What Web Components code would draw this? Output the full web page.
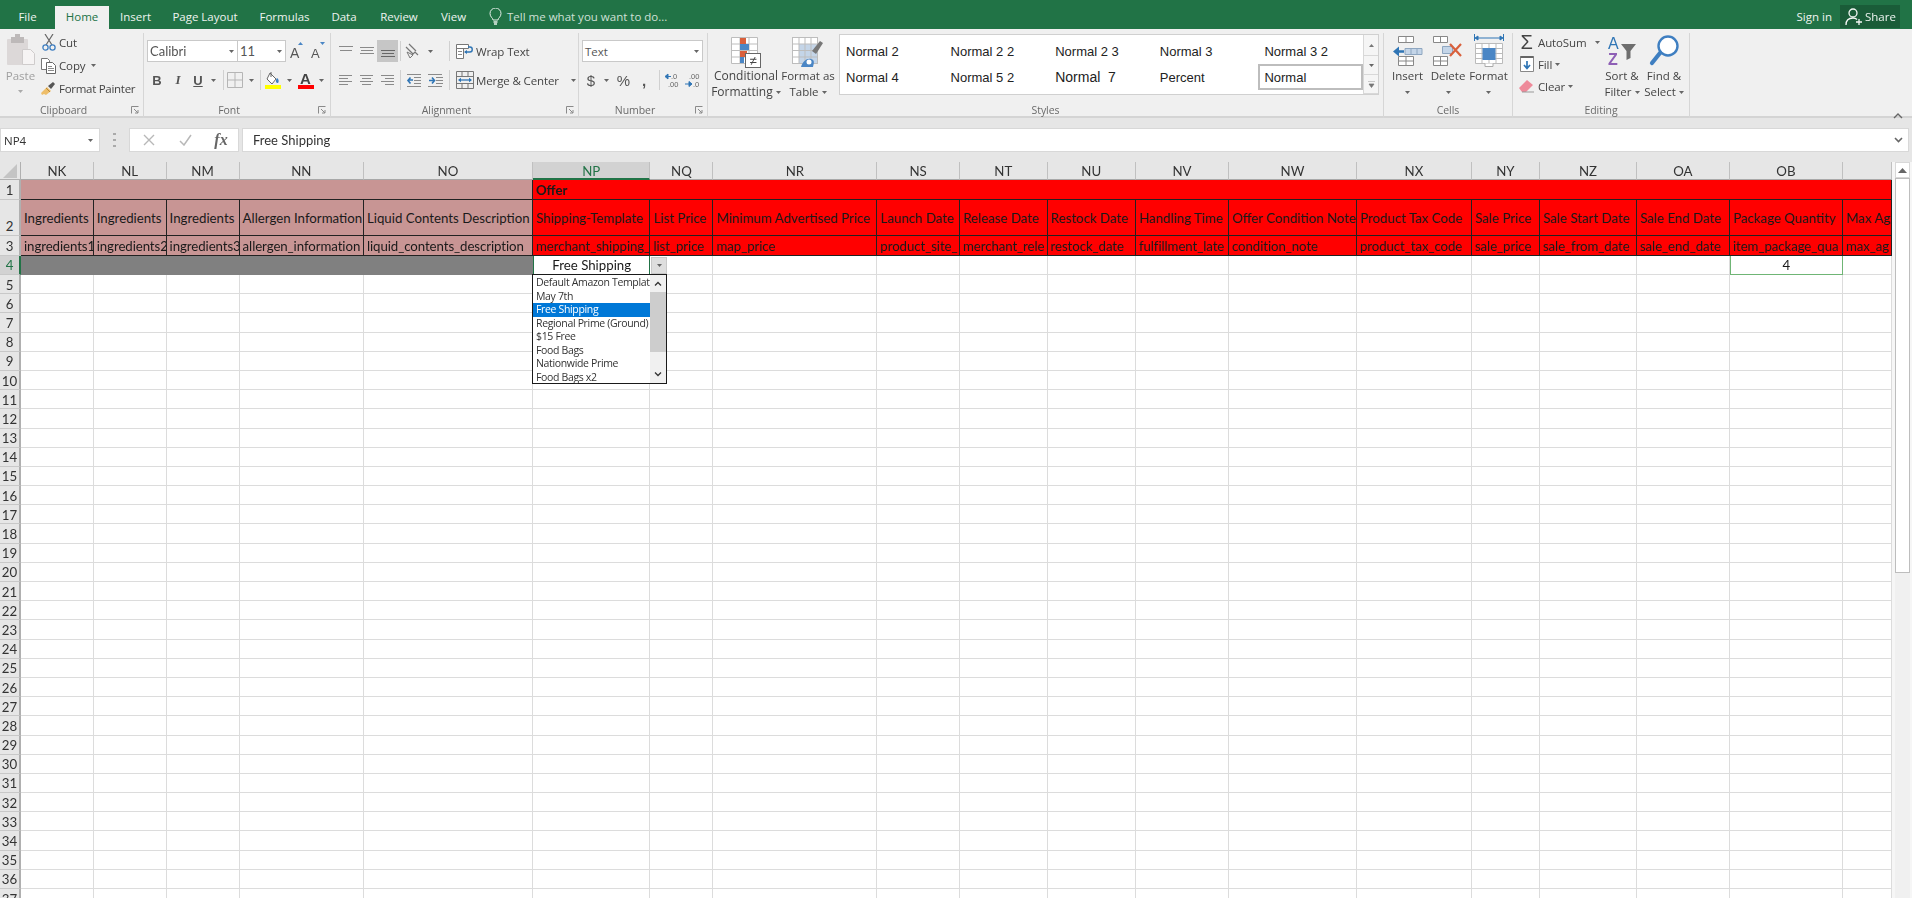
<!DOCTYPE html>
<html lang="en">
<head>
<meta charset="UTF-8">
<title>Excel</title>
<style>
  html, body { margin: 0; background: #fff; overflow: hidden; }
</style>
</head>
<body>
<xl-app>
  <xl-titlebar></xl-titlebar>
  <xl-ribbon></xl-ribbon>
  <xl-formula-bar cell="NP4" value="Free Shipping"></xl-formula-bar>
  <xl-sheet></xl-sheet>
</xl-app>

<script>
// icons : [width, height, svg body]
const ln = (x, y, w, c = '#8a8a8a') => `<path d="M${x} ${y+.5}h${w}" stroke="${c}" fill="none"/>`;
const ICONS = {
  caret: [5, 3, `<path d="M0 0h5L2.5 3z" fill="#666"/>`],
  launcher: [8, 8, `<path d="M.5 7.5V.5h7M3 3l4 4M4 7h3V4" fill="none" stroke="#8a8a8a"/>`],
  paste: [30, 32, `<rect x="1" y="5" width="21" height="26" rx="1" fill="#dcd8d8"/><rect x="5" y="3" width="13" height="6" fill="#bdb9b9"/><rect x="9" y="0" width="5" height="4" fill="#bdb9b9"/><path d="M16.5 15.5h8l4 4v11h-12z" fill="#f6f4f4" stroke="#cfcccc"/>`],
  cut: [14, 17, `<path d="M3 0l7 11M11 0L4 11" stroke="#666" stroke-width="1.2" fill="none"/><circle cx="3.5" cy="13.5" r="2.6" fill="none" stroke="#3f7fc1" stroke-width="1.3"/><circle cx="10.5" cy="13.5" r="2.6" fill="none" stroke="#3f7fc1" stroke-width="1.3"/>`],
  copy: [15, 16, `<path d="M.5.5h6l2 2v9h-8z" fill="#fff" stroke="#777"/><path d="M5.5 4.5h6l3 3v8h-9z" fill="#fff" stroke="#666"/>${ln(7,8,4)}${ln(7,10,6)}${ln(7,12,6)}`],
  painter: [17, 15, `<path d="M1 12l6-6 4 4-5 4-2-1-2 1z" fill="#eebe6a"/><path d="M8 5l5-4 2 2-4 5z" fill="#555"/><path d="M6 7l4 4" stroke="#b98a3a"/>`],
  fontup: [17, 18, `<text x="1" y="16" font-size="14" font-family="Liberation Sans" fill="#555">A</text><path d="M9 3l2.5-3L14 3z" fill="#4a86c5"/>`],
  fontdown: [17, 18, `<text x="1" y="16" font-size="13" font-family="Liberation Sans" fill="#555">A</text><path d="M10 0h5l-2.5 3z" fill="#4a86c5"/>`],
  border: [16, 16, `<path d="M.5.5h15v15H.5zM8 .5v15M.5 8h15" fill="none" stroke="#b5b5b5"/>`],
  fill: [18, 18, `<path d="M6 2l6 6-4 5-5-5z" fill="#fff" stroke="#666"/><path d="M7 1v5" stroke="#666"/><path d="M13 7c2 1 2 4 1 5-2 0-3-2-1-5z" fill="#3f7fc1"/><rect x="1" y="14" width="16" height="4" fill="#ffff00"/>`],
  color: [18, 18, `<text x="3" y="13" font-size="15" font-weight="700" font-family="Liberation Sans" fill="#444">A</text><rect x="1" y="14" width="16" height="4" fill="#ff0000"/>`],
  atop: [14, 14, ln(0,2,14)+ln(1,6,12)],
  amid: [14, 14, ln(0,3,14)+ln(1,6,12)+ln(0,9,14)],
  abot: [14, 14, ln(0,6,14,'#666')+ln(1,9,12,'#666')+ln(0,12,14,'#666')],
  aleft: [13, 13, ln(0,1,13)+ln(0,4,9)+ln(0,7,13)+ln(0,10,9)],
  acenter: [13, 13, ln(0,1,13)+ln(2,4,9)+ln(0,7,13)+ln(2,10,9)],
  aright: [13, 13, ln(0,1,13)+ln(4,4,9)+ln(0,7,13)+ln(4,10,9)],
  orient: [18, 16, `<path d="M2 4l7 7M5 1l7 7M8 12l3-3 3 3" fill="none" stroke="#777" stroke-width="1.2"/><path d="M3 9l3 6 3-3z" fill="none" stroke="#777"/>`],
  outdent: [15, 13, ln(1,0,14)+ln(8,3,7)+ln(8,6,7)+ln(8,9,7)+ln(1,12,14)+`<path d="M7 6H2M4.500 3.500L2 6.500l2.500 3" fill="none" stroke="#2f75b5" stroke-width="1.6"/>`],
  indent: [15, 13, ln(0,0,14)+ln(0,12,14)+ln(8,3,7)+ln(8,6,7)+ln(8,9,7)+`<path d="M1 6.500h5M4 3.500l2.500 3-2.500 3" fill="none" stroke="#2f75b5" stroke-width="1.6"/>`],
  wrap: [18, 17, `<path d="M.5 1.500h12v4h-12zM.5 5.500h7v10h-7z" fill="#fff" stroke="#777"/>${ln(2,8,4)}${ln(2,11,4)}<path d="M9 9h5c3 0 3-5 0-5h-2" fill="none" stroke="#2f75b5" stroke-width="1.4"/><path d="M8 9l3-2v4z" fill="#2f75b5"/>`],
  merge: [18, 18, `<path d="M.5 .5h17v17H.5zM.5 5.500h17M.5 12.500h17M6 .5v5M12 .5v5M6 12.500v5M12 12.500v5" fill="none" stroke="#777"/><path d="M3 9h12" stroke="#2f75b5" stroke-width="1.3"/><path d="M2 9l3-2.200v4.400zM16 9l-3-2.200v4.400z" fill="#2f75b5"/>`],
  dinc: [16, 16, `<text x="7" y="7" font-size="7.500" font-family="Liberation Sans" fill="#666">.0</text><text x="4" y="15" font-size="7.500" font-family="Liberation Sans" fill="#666">.00</text><path d="M1 4.500l3-2.500v5zM3 4.500h4" fill="#2f75b5" stroke="#2f75b5"/>`],
  ddec: [17, 16, `<text x="5" y="7" font-size="7.500" font-family="Liberation Sans" fill="#666">.00</text><text x="9" y="15" font-size="7.500" font-family="Liberation Sans" fill="#666">.0</text><path d="M8 12l-3-2.500v5zM1 12h5" fill="#2f75b5" stroke="#2f75b5"/>`],
  cf: [30, 31, `<path d="M.5.5h26v26H.5zM.5 7h26M.5 13.500h26M.5 20h26M9 .5v26M18 .5v26" fill="#fff" stroke="#bdbdbd"/><rect x="9" y="1" width="6" height="6" fill="#d9603c"/><rect x="9" y="7" width="9" height="6" fill="#4a86c5"/><rect x="9" y="14" width="7" height="6" fill="#d9603c"/><rect x="9" y="20" width="4" height="6" fill="#4a86c5"/><rect x="14.500" y="16.500" width="15" height="14" fill="#fff" stroke="#666"/><text x="22" y="28" font-size="13" text-anchor="middle" font-family="Liberation Sans" fill="#444">≠</text>`],
  table: [32, 31, `<rect x=".5" y=".5" width="25" height="26" fill="#fff" stroke="#bdbdbd"/><rect x="7" y="7" width="18" height="19" fill="#c4d5e8"/><path d="M.5 7h25M.5 13.500h25M.5 20h25M7 .5v26M13 .5v26M19 .5v26" fill="none" stroke="#bdbdbd"/><path d="M20 14L28 4l3 2-7 11z" fill="#777"/><path d="M9 30c2-6 6-9 10-8 4 1 3 4 2 8z" fill="#4a86c5"/><circle cx="17" cy="25" r="2.500" fill="#fff"/>`],
  insert: [30, 30, `<path d="M5.500 .5h15v6h-15zM13 .5v6" fill="#fff" stroke="#888"/><path d="M12 12.500h17v6H12zM18 12.500v6M24 12.500v6" fill="#c4d5e8" stroke="#8ea6c0"/><path d="M2 15.500h9" stroke="#2f75b5" stroke-width="2.500"/><path d="M0 15.500l6-5v10z" fill="#2f75b5"/><path d="M5.500 20.500h15v9h-15zM13 20.500v9M5.500 25h15" fill="#fff" stroke="#888"/>`],
  del: [30, 30, `<path d="M.5 .5h14v6H.5zM7.500 .5v6" fill="#fff" stroke="#888"/><path d="M9.500 10.500h10v7h-10z" fill="#c4d5e8" stroke="#8ea6c0"/><path d="M.5 20.500h14v9H.5zM7.500 20.500v9M.5 25h14" fill="#fff" stroke="#888"/><path d="M17 8l11 12M28 8L17 20" stroke="#d9603c" stroke-width="2.200" fill="none"/>`],
  format: [30, 33, `<path d="M2 4h26" stroke="#2f75b5"/><path d="M1 4l3-2v4zM29 4l-3-2v4zM.5 0v7M29.500 0v7" stroke="#2f75b5" fill="#2f75b5"/><path d="M1.500 9.500h27v20h-27zM8 9.500v20M15 9.500v20M22 9.500v20M1.500 14.500h27M1.500 19.500h27M1.500 24.500h27" fill="#fff" stroke="#bbb"/><rect x="8.500" y="14" width="13" height="12" fill="#4a86c5"/><path d="M11 29.500v3h8v-3" fill="#fff" stroke="#aaa"/>`],
  fillicon: [14, 16, `<path d="M.5 .5h13v15H.5z" fill="#fff" stroke="#888"/><path d="M.5 1h13" stroke="#666" stroke-width="2"/><path d="M7 5v7M4 9l3 3.500L10 9" fill="none" stroke="#2f75b5" stroke-width="1.700"/>`],
  eraser: [17, 15, `<path d="M1 9l8-8 6 5-7 7H4z" fill="#ee8a9a"/><path d="M4 13h12" stroke="#999"/>`],
  sort: [30, 30, `<text x="1" y="13" font-size="16" font-family="Liberation Sans" fill="#2f75b5">A</text><text x="1" y="29" font-size="16" font-family="Liberation Sans" font-weight="700" fill="#8e5fb5">Z</text><path d="M14 8h15l-5.500 7v7l-4 2v-9z" fill="#6e6e6e"/>`],
  find: [30, 33, `<circle cx="19" cy="12" r="9.500" fill="#fff" stroke="#3f7fc1" stroke-width="2.400"/><path d="M11 19L3 29" stroke="#3f7fc1" stroke-width="4.200" stroke-linecap="round"/>`],
  bulb: [13, 18, `<path d="M4 12c0-2-3-3-3-6.500a5.500 5.500 0 0 1 11 0C12 9 9 10 9 12z" fill="none" stroke="#e6efe9"/><path d="M4.500 14h4M5 16h3" stroke="#e6efe9" stroke-width="1.300"/>`],
  share: [18, 18, `<circle cx="8" cy="5" r="4" fill="none" stroke="#f3f7f4" stroke-width="1.300"/><path d="M1 17c0-5 3-7 7-7 2 0 3 .5 4 1.500" fill="none" stroke="#f3f7f4" stroke-width="1.300"/><path d="M14 11v6M11 14h6" stroke="#f3f7f4" stroke-width="1.300"/>`],
  dots: [3, 14, `<path d="M0 1h3M0 7h3M0 13h3" stroke="#aaa" stroke-width="2"/>`],
  x: [12, 12, `<path d="M1 1l10 10M11 1L1 11" stroke="#b8b8b8" stroke-width="1.400" fill="none"/>`],
  check: [13, 12, `<path d="M1 7l4 4 7-10" stroke="#b8b8b8" stroke-width="1.500" fill="none"/>`],
  chev: [9, 6, `<path d="M1 1l3.500 3.500L8 1" stroke="#666" stroke-width="1.600" fill="none"/>`],
  chevup: [10, 6, `<path d="M1 5l4-4 4 4" stroke="#666" stroke-width="1.400" fill="none"/>`],
  triup: [9, 5, `<path d="M0 5l4.500-5L9 5z" fill="#666"/>`],
  upbar: [5, 3, `<path d="M0 3l2.500-3L5 3z" fill="#777"/>`],
  morebar: [7, 7, `<path d="M0 0h7M1 3h5l-2.500 3.500z" stroke="#777" fill="#777" stroke-width=".7"/>`],
  smallup: [8, 5, `<path d="M1 4.500L4 1.500l3 3" stroke="#333" stroke-width="1.300" fill="none"/>`],
  smalldown: [8, 5, `<path d="M1 .5l3 3 3-3" stroke="#333" stroke-width="1.300" fill="none"/>`],
};

class XlIcon extends HTMLElement {
  connectedCallback() {
    const [w, h, body] = ICONS[this.getAttribute('name')];
    const box = this.getAttribute('box');
    this.attachShadow({mode: 'open'}).innerHTML = `
      <style>:host { display: inline-flex; align-items: center; justify-content: center; flex: none; ${box ? `width:${box}px;` : ''} } svg { display: block; }</style>
      <svg width="${w}" height="${h}" viewBox="0 0 ${w} ${h}">${body}</svg>`;
  }
}
customElements.define('xl-icon', XlIcon);

class XlApp extends HTMLElement {
  constructor() {
    super();
    this.attachShadow({mode: 'open'}).innerHTML = `
      <style>
        :host { display: flex; flex-direction: column; width: 1912px; height: 904px; overflow: hidden;
                font-family: "Open Sans", "Liberation Sans", sans-serif; filter: blur(.35px); }
      </style>
      <slot></slot>`;
  }
}
customElements.define('xl-app', XlApp);

class XlTab extends HTMLElement {
  constructor() {
    super();
    this.attachShadow({mode: 'open'}).innerHTML = `
      <style>
        :host { display: flex; align-items: center; justify-content: center; height: 23px; box-sizing: border-box; padding-bottom: 2px; flex: none; }
        :host([active]) { background: #f0f0f0; color: #217346; }
      </style>
      <slot></slot>`;
  }
}
customElements.define('xl-tab', XlTab);

class XlTitlebar extends HTMLElement {
  constructor() {
    super();
    const tabs = [['File',55],['Home',54],['Insert',53],['Page Layout',86],['Formulas',73],['Data',46],['Review',64],['View',45]];
    this.attachShadow({mode: 'open'}).innerHTML = `
      <style>
        :host { display: flex; align-items: flex-end; height: 29px; background: #217346; color: #eef4f0; font-size: 11.5px; flex: none; }
        .tell { display: flex; align-items: center; gap: 5px; height: 23px; padding-bottom: 2px; box-sizing: border-box; margin-left: 13px; color: #cfe0d6; }
        .right { margin-left: auto; display: flex; align-items: flex-start; height: 29px; box-sizing: border-box; padding: 5px 12px 0 0; line-height: 23px; }
        .share { display: flex; align-items: center; gap: 2px; height: 23px; width: 60px; margin-left: 8px; padding-left: 5px; box-sizing: border-box; background: #1a5c38; }
      </style>
      ${tabs.map(([t, w]) => `<xl-tab style="width:${w}px" ${t == 'Home' ? 'active' : ''}>${t}</xl-tab>`).join('')}
      <div class="tell"><xl-icon name="bulb"></xl-icon>Tell me what you want to do...</div>
      <div class="right"><span>Sign in</span><div class="share"><xl-icon name="share"></xl-icon>Share</div></div>`;
  }
}
customElements.define('xl-titlebar', XlTitlebar);

class XlGroup extends HTMLElement {
  constructor() {
    super();
    this.attachShadow({mode: 'open'}).innerHTML = `
      <style>
        :host { display: grid; grid-template-rows: 1fr 16px; height: 85px; box-sizing: border-box; border-right: 1px solid #d6d6d6; flex: none; min-width: 0; }
        .body { min-width: 0; }
        .foot { position: relative; text-align: center; font-size: 10.5px; line-height: 16px; color: #6a6a6a; letter-spacing: -.05px; }
        :host([launcher]) .foot { padding-right: 16px; }
        xl-icon { display: none; position: absolute; right: 4px; top: 4px; }
        :host([launcher]) xl-icon { display: block; }
      </style>
      <div class="body"><slot></slot></div>
      <div class="foot"><span></span><xl-icon name="launcher"></xl-icon></div>`;
  }
  connectedCallback() { this.shadowRoot.querySelector('span').textContent = this.getAttribute('label'); }
}
customElements.define('xl-group', XlGroup);

class XlRibbon extends HTMLElement {
  constructor() {
    super();
    const ic = (n, b) => `<xl-icon name="${n}" ${b ? `box="${b}"` : ''}></xl-icon>`;
    const big = (icon, l1, l2, w, caretOwnLine, cls = '') => `
      <div class="big ${cls}" style="width:${w}px">
        <div class="bigicon">${ic(icon)}</div>
        <div>${l1}</div>
        <div>${l2}${caretOwnLine ? '' : ' '}<xl-icon name="caret" class="c"></xl-icon></div>
      </div>`;
    const styles = ['Normal 2','Normal 2 2','Normal 2 3','Normal 3','Normal 3 2','Normal 4','Normal 5 2','Normal  7','Percent','Normal'];
    this.attachShadow({mode: 'open'}).innerHTML = `
      <style>
        :host { display: flex; height: 89px; box-sizing: border-box; padding-top: 4px; background: #f0f0f0; border-bottom: 2px solid #d4d4d4;
                font-size: 11.5px; color: #444; flex: none; position: relative; }
        .rows { display: flex; flex-direction: column; gap: 7px; padding-top: 7px; }
        .row { display: flex; align-items: center; height: 22px; }
        .combo { display: flex; align-items: center; justify-content: space-between; height: 22px; box-sizing: border-box; padding: 0 3px 0 2px;
                 background: #fff; border: 1px solid #c9c9c9; color: #555; }
        .sep { width: 1px; height: 20px; background: #d0d0d0; flex: none; }
        .g { display: flex; align-items: center; justify-content: center; flex: none; font-family: "Liberation Sans", sans-serif; font-size: 13px; color: #555; }
        .active { background: #c6c6c6; height: 22px; width: 21px; display: flex; align-items: center; justify-content: center; }
        .small { display: flex; align-items: center; height: 22px; white-space: nowrap; letter-spacing: -.12px; }
        .big { display: flex; flex-direction: column; align-items: center; text-align: center; line-height: 16px; flex: none; white-space: nowrap; }
        .bigicon { height: 35px; display: flex; align-items: center; justify-content: center; box-sizing: border-box; }
        .c { vertical-align: middle; }
        /* clipboard */
        .clip { display: grid; grid-template-columns: 40px 1fr; }
        .clip .small { height: 23px; }
        .clip .list { margin-top: -2px; }
        .paste { display: flex; flex-direction: column; align-items: center; color: #a0a0a0; width: 33px; padding-top: 1px; }
        .paste div { line-height: 14px; margin-top: 3px; }
        .paste xl-icon[name=caret] { margin-top: 7px; opacity: .5; }
        .tick { width: 17px; display: flex; justify-content: center; margin-right: 2px; }
        /* styles */
        .styles { display: flex; height: 100%; padding-left: 5px; }
        .styles.shift .wide { font-size: 12px; }
        .styles.shift .bigicon { padding-top: 3px; }
        .gallery { display: flex; width: 540px; height: 61px; box-sizing: border-box; background: #fff; border: 1px solid #d0d0d0; margin-top: 1px; margin-left: 2px; }
        .items { display: grid; grid-template-columns: repeat(5, 1fr); grid-auto-rows: 26px; padding-top: 3px; flex: 1; }
        .items div { display: flex; align-items: center; padding-left: 6px; font-family: "Liberation Sans", sans-serif; font-size: 13px; color: #222; white-space: pre; box-sizing: border-box; }
        .items .big7 { font-size: 14px; }
        .items .sel { border: 2px solid #bdbdbd; padding-left: 4px; }
        .scroll { width: 14px; display: grid; grid-template-rows: 21px 19px 1fr; border-left: 1px solid #d8d8d8; background: #f5f5f5; }
        .scroll span { display: flex; align-items: center; justify-content: center; border-bottom: 1px solid #d8d8d8; }
        /* editing */
        .edit { display: flex; }
        .edit .col { width: 88px; flex: none; padding-left: 5px; margin-top: -2px; box-sizing: border-box; }
      </style>

      <xl-group label="Clipboard" launcher style="width:144px">
        <div class="clip">
          <div class="paste" style="padding-left:4px">${ic('paste')}<div>Paste</div>${ic('caret')}</div>
          <div class="list">
            <div class="small"><span class="tick">${ic('cut')}</span>Cut</div>
            <div class="small"><span class="tick">${ic('copy')}</span>Copy&nbsp;&nbsp;${ic('caret')}</div>
            <div class="small" style="letter-spacing:-.28px"><span class="tick">${ic('painter')}</span>Format Painter</div>
          </div>
        </div>
      </xl-group>

      <xl-group label="Font" launcher style="width:187px">
        <div class="rows" style="padding-left:3px">
          <div class="row">
            <div class="combo" style="width:91px;font-family:Lato,sans-serif;font-size:13px">Calibri ${ic('caret')}</div>
            <div class="combo" style="width:48px;font-family:Lato,sans-serif;font-size:13px;border-left:0">11 ${ic('caret')}</div>
            ${ic('fontup','22')}${ic('fontdown','20')}
          </div>
          <div class="row">
            <span class="g" style="width:20px;font-weight:700">B</span>
            <span class="g" style="width:22px;font-style:italic;font-weight:700;font-family:'Liberation Serif',serif">I</span>
            <span class="g" style="width:18px;font-weight:700;text-decoration:underline">U</span>
            ${ic('caret','12')}<span style="width:4px"></span><span class="sep"></span>
            ${ic('border','21')}${ic('caret','13')}<span style="width:2px"></span><span class="sep"></span>
            ${ic('fill','24')}${ic('caret','9')}${ic('color','23')}${ic('caret','9')}
          </div>
        </div>
      </xl-group>

      <xl-group label="Alignment" launcher style="width:248px">
        <div class="rows" style="padding-left:4px;letter-spacing:-.12px">
          <div class="row">
            ${ic('atop','21')}${ic('amid','21')}<span class="active">${ic('abot')}</span>
            <span style="width:2px"></span><span class="sep"></span>
            ${ic('orient','24')}${ic('caret','10')}<span style="width:14px"></span><span class="sep"></span>
            <span style="width:5px"></span>${ic('wrap','19')}<span style="width:2px"></span>Wrap Text
          </div>
          <div class="row">
            ${ic('aleft','21')}${ic('acenter','21')}${ic('aright','21')}
            <span style="width:2px"></span><span class="sep"></span>
            ${ic('outdent','24')}${ic('indent','20')}<span style="width:4px"></span><span class="sep"></span>
            <span style="width:5px"></span>${ic('merge','19')}<span style="width:2px"></span>Merge &amp; Center<span style="width:12px"></span>${ic('caret')}
          </div>
        </div>
      </xl-group>

      <xl-group label="Number" launcher style="width:129px">
        <div class="rows" style="padding-left:3px">
          <div class="row"><div class="combo" style="width:121px">Text ${ic('caret')}</div></div>
          <div class="row">
            <span class="g" style="width:18px;font-size:15px">$</span>${ic('caret','12')}
            <span class="g" style="width:23px;font-size:15px">%</span>
            <span class="g" style="width:18px;font-size:15px;font-weight:700">,</span>
            <span style="width:6px"></span><span class="sep"></span>
            ${ic('dinc','23')}${ic('ddec','19')}
          </div>
        </div>
      </xl-group>

      <xl-group label="Styles" style="width:676px">
        <div class="styles shift">
          ${big('cf','Conditional','Formatting',66,false,'wide')}
          ${big('table','Format as','Table',58)}
          <div class="gallery">
            <div class="items">${styles.map(s => `<div class="${s == 'Normal' ? 'sel' : ''} ${s == 'Normal  7' ? 'big7' : ''}">${s}</div>`).join('')}</div>
            <div class="scroll"><span>${ic('upbar')}</span><span>${ic('caret')}</span><span>${ic('morebar')}</span></div>
          </div>
        </div>
      </xl-group>

      <xl-group label="Cells" style="width:129px">
        <div class="styles" style="padding-left:3px">
          ${big('insert','Insert','',41,true)}
          ${big('del','Delete','',40,true)}
          ${big('format','Format','',41,true)}
        </div>
      </xl-group>

      <xl-group label="Editing" style="width:177px">
        <div class="edit">
          <div class="col">
            <div class="small"><span class="g" style="width:17px;font-size:20px;color:#444;margin-right:3px">Σ</span>AutoSum&nbsp;&nbsp;&nbsp;${ic('caret')}</div>
            <div class="small"><span class="tick" style="margin-right:3px">${ic('fillicon')}</span>Fill&nbsp;${ic('caret')}</div>
            <div class="small"><span class="tick" style="margin-right:3px">${ic('eraser')}</span>Clear&nbsp;${ic('caret')}</div>
          </div>
          ${big('sort','Sort &amp;','Filter',42)}
          ${big('find','Find &amp;','Select',42)}
        </div>
      </xl-group>

      <div style="margin-left:auto;padding:74px 9px 0 0">${ic('chevup')}</div>`;
  }
}
customElements.define('xl-ribbon', XlRibbon);

class XlFormulaBar extends HTMLElement {
  connectedCallback() {
    this.attachShadow({mode: 'open'}).innerHTML = `
      <style>
        :host { display: flex; height: 44px; box-sizing: border-box; padding-top: 10px; background: #e6e6e6; flex: none; font-size: 11.5px; color: #333; }
        .box { display: flex; align-items: center; height: 24px; box-sizing: border-box; background: #fff; border: 1px solid #d8d8d8; }
        .name { width: 100px; padding: 0 6px 0 3px; justify-content: space-between; }
        .grip { width: 29px; display: flex; justify-content: center; align-items: center; height: 24px; }
        .btns { width: 110px; margin-right: 3px; }
        .fx { font-family: "Liberation Serif", serif; font-style: italic; font-size: 16px; font-weight: 700; color: #666; }
        .input { width: 1667px; padding: 0 5px 0 10px; justify-content: space-between; font-family: Lato, sans-serif; font-size: 13px; }
      </style>
      <div class="box name"><span>${this.getAttribute('cell')}</span><xl-icon name="caret"></xl-icon></div>
      <div class="grip"><xl-icon name="dots"></xl-icon></div>
      <div class="box btns"><xl-icon name="x" box="37"></xl-icon><xl-icon name="check" box="37"></xl-icon><span class="fx" style="width:34px;text-align:center">fx</span></div>
      <div class="box input"><span>${this.getAttribute('value')}</span><xl-icon name="chev"></xl-icon></div>`;
  }
}
customElements.define('xl-formula-bar', XlFormulaBar);

class XlDropdown extends HTMLElement {
  constructor() {
    super();
    const items = ['Default Amazon Templat','May 7th','Free Shipping','Regional Prime (Ground)','$15 Free','Food Bags','Nationwide Prime','Food Bags x2'];
    this.attachShadow({mode: 'open'}).innerHTML = `
      <style>
        :host { display: flex; position: absolute; left: 532px; top: 112px; width: 135px; height: 110px; box-sizing: border-box;
                background: #fff; border: 1px solid #1a1a1a; font-size: 10.5px; letter-spacing: -.34px; color: #333; font-family: "Open Sans", sans-serif; }
        .list { flex: 1; min-width: 0; padding-top: 1px; }
        .list div { height: 13.5px; line-height: 13.5px; padding-left: 3px; white-space: nowrap; overflow: hidden; }
        .list .on { background: #0078d7; color: #fff; }
        .bar { width: 16px; background: #f0f0f0; display: grid; grid-template-rows: 17px 60px 1fr 17px; }
        .bar span { display: flex; align-items: center; justify-content: center; }
        .thumb { background: #cdcdcd; }
      </style>
      <div class="list">${items.map(t => `<div class="${t == 'Free Shipping' ? 'on' : ''}">${t}</div>`).join('')}</div>
      <div class="bar"><span><xl-icon name="smallup"></xl-icon></span><span class="thumb"></span><span></span><span><xl-icon name="smalldown"></xl-icon></span></div>`;
  }
}
customElements.define('xl-dropdown', XlDropdown);

class XlSheet extends HTMLElement {
  constructor() {
    super();
    const edges = [0,21,93.7,166.6,239.6,364,533,650.5,713.5,877.4,960,1047.6,1136,1229,1357,1472,1540,1637,1730,1843,1892];
    const widths = edges.slice(1).map((e, i) => (e - edges[i]).toFixed(1) + 'px').join(' ');
    const names = ['NK','NL','NM','NN','NO','NP','NQ','NR','NS','NT','NU','NV','NW','NX','NY','NZ','OA','OB',''];
    const row2 = ['Ingredients','Ingredients','Ingredients','Allergen Information','Liquid Contents Description','Shipping-Template','List Price','Minimum Advertised Price','Launch Date','Release Date','Restock Date','Handling Time','Offer Condition Note','Product Tax Code','Sale Price','Sale Start Date','Sale End Date','Package Quantity','Max Agg'];
    const row3 = ['ingredients1','ingredients2','ingredients3','allergen_information','liquid_contents_description','merchant_shipping_','list_price','map_price','product_site_','merchant_rele','restock_date','fulfillment_late','condition_note','product_tax_code','sale_price','sale_from_date','sale_end_date','item_package_qua','max_ag'];
    let h = `<div class="corner"><svg width="14" height="14"><path d="M14 0v14H0z" fill="#c4c4c4"/></svg></div>`;
    names.forEach(n => h += `<div class="ch ${n == 'NP' ? 'cur' : ''}">${n}</div>`);
    for (let r = 1; r <= 37; r++) {
      const cls = r == 4 ? 'rh cur' : r == 2 ? 'rh bot' : 'rh';
      h += `<div class="${cls}">${r}</div>`;
      if (r == 1) {
        h += `<div class="c rose line" style="grid-column:span 5"></div><div class="c red line" style="grid-column:span 14;font-weight:700">Offer</div>`;
      } else if (r == 2 || r == 3) {
        // row 3 holds field names that just fill their columns, so it runs a hair tighter
        (r == 2 ? row2 : row3).forEach((t, i) => h += `<div class="c ${i < 5 ? 'rose' : 'red'} line ${r == 3 ? 'tight' : ''}">${t}</div>`);
      } else if (r == 4) {
        h += `<div class="c grey" style="grid-column:span 5"></div><div class="c sel mid">Free Shipping</div>`;
        for (let i = 6; i < 19; i++) h += i == 17 ? `<div class="c sel2 mid">4</div>` : `<div class="c"></div>`;
      } else {
        for (let i = 0; i < 19; i++) h += `<div class="c"></div>`;
      }
    }
    this.attachShadow({mode: 'open'}).innerHTML = `
      <style>
        :host { display: flex; height: 736px; flex: none; position: relative; overflow: hidden; background: #fff; color: #1a1a1a; }
        .grid { display: grid; width: 1892px; flex: none; font-family: Lato, "Liberation Sans", sans-serif; font-size: 13.25px;
                grid-template-columns: ${widths};
                grid-template-rows: 18px 19.5px 36.5px 19.5px 19.5px repeat(33, 19.2px); }
        .grid > div { box-sizing: border-box; white-space: nowrap; overflow: hidden; }
        .corner { background: #e6e6e6; border-right: 1px solid #b0b0b0; border-bottom: 1px solid #b0b0b0; display: flex; align-items: center; justify-content: center; }
        .ch { background: #e6e6e6; border-right: 1px solid #c0c0c0; border-bottom: 1px solid #a8a8a8; text-align: center; line-height: 18px; color: #333; }
        .ch.cur { background: #d2d2d2; color: #217346; border-bottom: 2px solid #217346; }
        .rh { background: #e6e6e6; border-right: 2px solid #b0b0b0; border-bottom: 1px solid #c8c8c8; text-align: center; color: #333; display: flex; align-items: center; justify-content: center; padding-top: 1px; }
        .rh.bot { align-items: flex-end; padding-bottom: 1px; }
        .rh.cur { background: #d2d2d2; color: #217346; border-right: 2px solid #217346; }
        .c { border-right: 1px solid #dcdcdc; border-bottom: 1px solid #dcdcdc; padding: 1px 0 0 3px; display: flex; align-items: center; }
        .rose { background: #c89594; }
        .red { background: #ff0000; }
        .line { border-right: 1px solid #222; border-bottom: 1px solid #222; }
        .tight { letter-spacing: -.08px; }
        .grey { background: #808080; border-color: #808080; }
        .mid { justify-content: center; padding-left: 0; }
        .sel { border: 1px solid #217346; border-top: 0; }
        .sel2 { border: 1px solid #6fb575; border-top: 0; }
        .filter { position: absolute; left: 651px; top: 95px; width: 16px; height: 17px; box-sizing: border-box; background: #dedede; border: 1px solid #c8c8c8; display: flex; align-items: center; justify-content: center; }
        .vbar { flex: 1; display: flex; flex-direction: column; padding: 0 2px 0 3px; background: #f6f6f6; }
        .vbar .btn { height: 16px; background: #fff; border: 1px solid #d8d8d8; box-sizing: border-box; display: flex; align-items: center; justify-content: center; flex: none; }
        .vbar .thumb { height: 395px; background: #fff; border: 1px solid #bdbdbd; box-sizing: border-box; flex: none; }
        .vbar .track { flex: 1; background: #f0f0f0; }
      </style>
      <div class="grid">${h}</div>
      <div class="vbar"><div class="btn"><xl-icon name="triup"></xl-icon></div><div class="thumb"></div><div class="track"></div></div>
      <div class="filter"><xl-icon name="caret"></xl-icon></div>
      <xl-dropdown></xl-dropdown>`;
  }
}
customElements.define('xl-sheet', XlSheet);
</script>
</body>
</html>
